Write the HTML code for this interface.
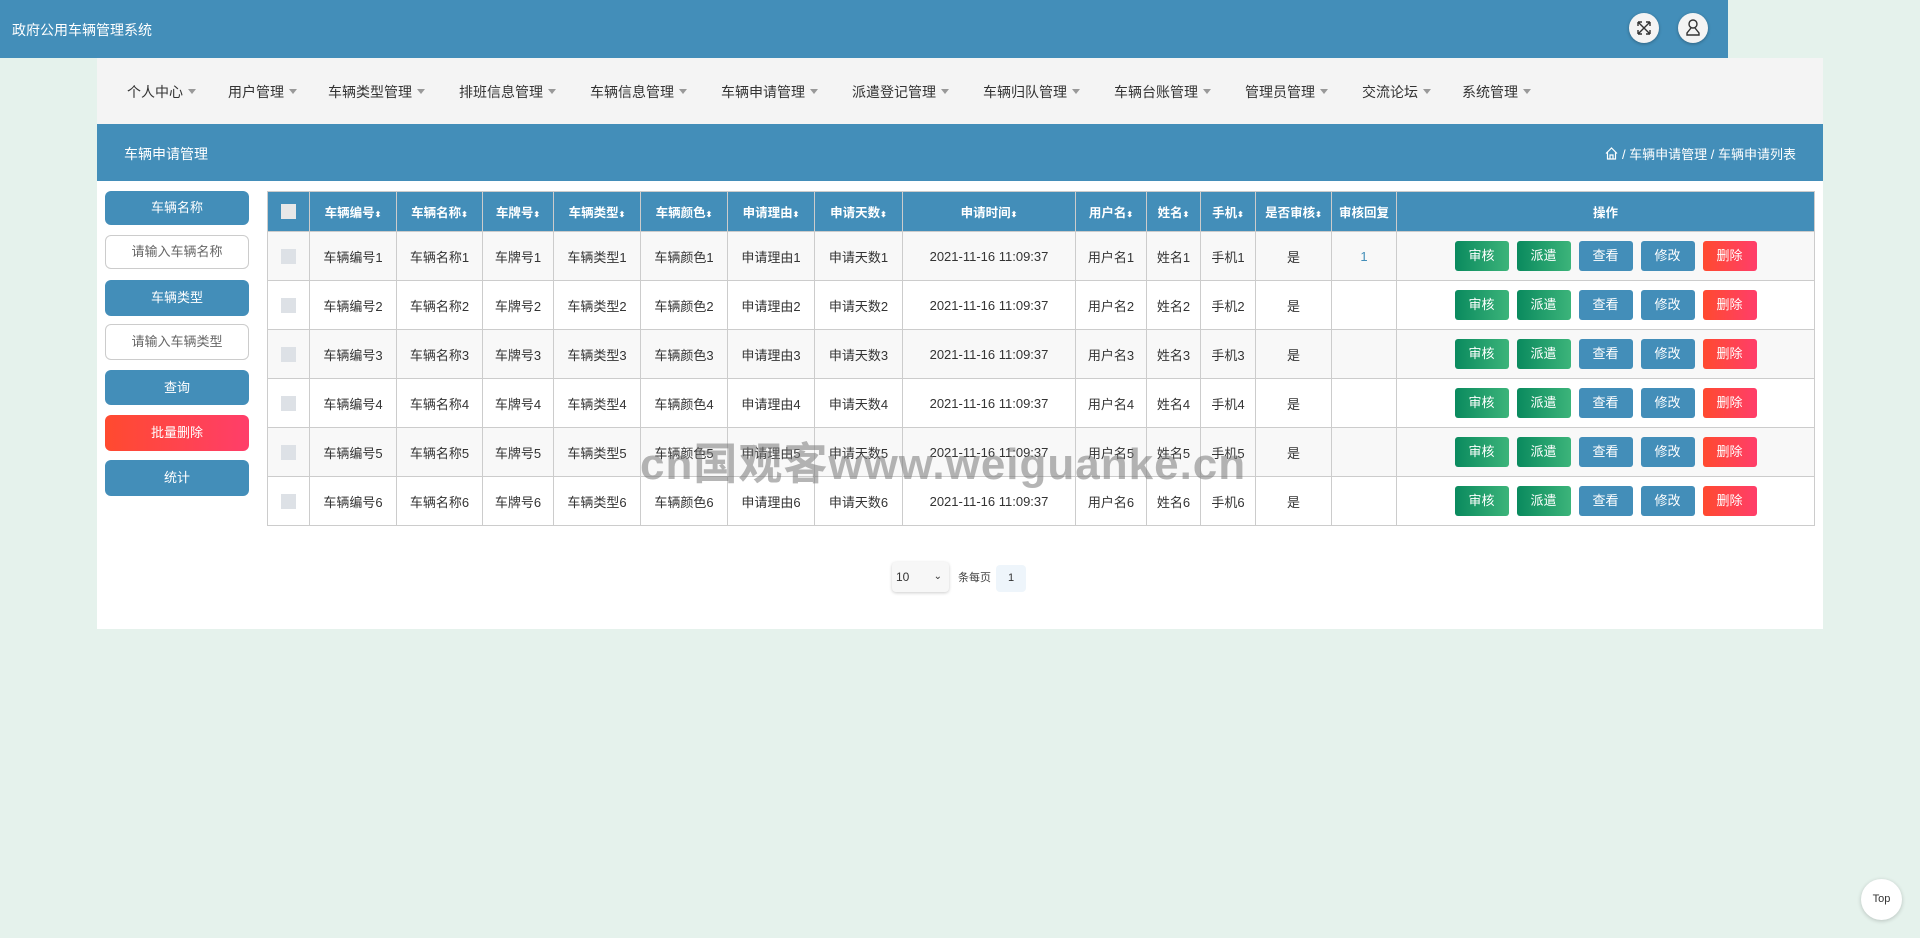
<!DOCTYPE html>
<html><head><meta charset="utf-8"><style>
*{box-sizing:border-box;margin:0;padding:0}
body{width:1920px;height:938px;background:#e5f2ec;font-family:"Liberation Sans","Noto Sans CJK SC",sans-serif;position:relative;overflow:hidden;color:#333}
.hdr{position:absolute;left:0;top:0;width:1728px;height:58px;background:#438eb9;color:#fff;font-size:14px}
.hdr .t{position:absolute;left:12px;top:20px}
.ic{position:absolute;top:13px;width:30px;height:30px;border-radius:50%;background:#f4f4f4;box-shadow:0 1px 3px rgba(0,0,0,.3)}
.nav{position:absolute;left:97px;top:58px;width:1726px;height:66px;background:#f4f4f4;font-size:14px;color:#333}
.nav span{position:absolute;top:24px;white-space:nowrap}
.nav span:after{content:"";display:inline-block;margin-left:5px;vertical-align:3px;border:4px solid transparent;border-top:5px solid #999;border-bottom:0}
.tb{position:absolute;left:97px;top:124px;width:1726px;height:57px;background:#438eb9;color:#fff;font-size:14px}
.main{position:absolute;left:97px;top:181px;width:1726px;height:448px;background:#fff}
.sb{position:absolute;left:105px;width:144px;border-radius:6px;font-size:13px;text-align:center;color:#fff;background:#438eb9}
.inp{background:#fff;border:1px solid #ccc;color:#666}
table{position:absolute;left:267px;top:191px;width:1548px;border-collapse:collapse;font-size:13px;text-align:center}
th{background:#438eb9;color:#fff;height:40px;border:1px solid #ccc;font-weight:bold;font-size:12.5px;white-space:nowrap}
td{height:49px;border:1px solid #ccc;white-space:nowrap}
tbody tr:nth-child(odd){background:#f8f8f8}
.cb{display:inline-block;width:15px;height:15px;background:#dde1e6;vertical-align:middle}
th .cb{background:#e8e8e8}
.b{display:inline-block;width:54px;height:30px;line-height:30px;border-radius:3px;color:#fff;margin:0 4px;font-size:13px}
.g{background:linear-gradient(90deg,#0a8a5e,#3cb47a)}
.bl{background:#438eb9}
.r{background:linear-gradient(90deg,#ff4a2f,#ff3e6a)}
.ar{font-size:8px}
</style></head><body>
<div class="hdr"><div class="t">政府公用车辆管理系统</div>
<div class="ic" style="left:1629px"><svg width="30" height="30" viewBox="0 0 30 30" fill="none" stroke="#333" stroke-width="1.4"><path d="M9 9l12 12M21 9L9 21M9 9h4M9 9v4M21 9h-4M21 9v4M9 21h4M9 21v-4M21 21h-4M21 21v-4"/></svg></div>
<div class="ic" style="left:1678px"><svg width="30" height="30" viewBox="0 0 30 30" fill="none" stroke="#333" stroke-width="1.4"><circle cx="15" cy="11" r="4"/><path d="M13 15l-4 5v2h12v-2l-4-5"/></svg></div>
</div>
<div class="nav">
<span style="left:30px">个人中心</span><span style="left:131px">用户管理</span><span style="left:231px">车辆类型管理</span><span style="left:362px">排班信息管理</span><span style="left:493px">车辆信息管理</span><span style="left:624px">车辆申请管理</span><span style="left:755px">派遣登记管理</span><span style="left:886px">车辆归队管理</span><span style="left:1017px">车辆台账管理</span><span style="left:1148px">管理员管理</span><span style="left:1265px">交流论坛</span><span style="left:1365px">系统管理</span>
</div>
<div class="tb"><span style="position:absolute;left:27px;top:20px">车辆申请管理</span>
<span style="position:absolute;right:27px;top:20px;font-size:13px"><svg width="13" height="13" viewBox="0 0 13 13" fill="none" stroke="#fff" stroke-width="1.2" style="vertical-align:-1px"><path d="M1 6.5L6.5 1 12 6.5M2.5 5v7h8V5M5 12V8h3v4"/></svg> / 车辆申请管理 / 车辆申请列表</span></div>
<div class="main"></div>
<div class="sb" style="top:191px;height:34px;line-height:34px">车辆名称</div>
<div class="sb inp" style="top:235px;height:34px;line-height:32px">请输入车辆名称</div>
<div class="sb" style="top:280px;height:36px;line-height:36px">车辆类型</div>
<div class="sb inp" style="top:324px;height:36px;line-height:34px">请输入车辆类型</div>
<div class="sb" style="top:370px;height:35px;line-height:35px">查询</div>
<div class="sb" style="top:415px;height:36px;line-height:36px;background:linear-gradient(90deg,#ff4a2f,#ff3e6a)">批量删除</div>
<div class="sb" style="top:460px;height:36px;line-height:36px">统计</div>
<table>
<colgroup><col style="width:42px"><col style="width:87px"><col style="width:86px"><col style="width:71px"><col style="width:87px"><col style="width:87px"><col style="width:87px"><col style="width:88px"><col style="width:173px"><col style="width:71px"><col style="width:54px"><col style="width:55px"><col style="width:76px"><col style="width:65px"><col></colgroup>
<thead><tr><th><span class="cb"></span></th><th>车辆编号<span class="ar">⬍</span></th><th>车辆名称<span class="ar">⬍</span></th><th>车牌号<span class="ar">⬍</span></th><th>车辆类型<span class="ar">⬍</span></th><th>车辆颜色<span class="ar">⬍</span></th><th>申请理由<span class="ar">⬍</span></th><th>申请天数<span class="ar">⬍</span></th><th>申请时间<span class="ar">⬍</span></th><th>用户名<span class="ar">⬍</span></th><th>姓名<span class="ar">⬍</span></th><th>手机<span class="ar">⬍</span></th><th>是否审核<span class="ar">⬍</span></th><th>审核回复</th><th>操作</th></tr></thead>
<tbody>
<tr><td><span class="cb"></span></td><td>车辆编号1</td><td>车辆名称1</td><td>车牌号1</td><td>车辆类型1</td><td>车辆颜色1</td><td>申请理由1</td><td>申请天数1</td><td>2021-11-16 11:09:37</td><td>用户名1</td><td>姓名1</td><td>手机1</td><td>是</td><td style="color:#438eb9">1</td><td><span class="b g">审核</span><span class="b g">派遣</span><span class="b bl">查看</span><span class="b bl">修改</span><span class="b r">删除</span></td></tr>
<tr><td><span class="cb"></span></td><td>车辆编号2</td><td>车辆名称2</td><td>车牌号2</td><td>车辆类型2</td><td>车辆颜色2</td><td>申请理由2</td><td>申请天数2</td><td>2021-11-16 11:09:37</td><td>用户名2</td><td>姓名2</td><td>手机2</td><td>是</td><td></td><td><span class="b g">审核</span><span class="b g">派遣</span><span class="b bl">查看</span><span class="b bl">修改</span><span class="b r">删除</span></td></tr>
<tr><td><span class="cb"></span></td><td>车辆编号3</td><td>车辆名称3</td><td>车牌号3</td><td>车辆类型3</td><td>车辆颜色3</td><td>申请理由3</td><td>申请天数3</td><td>2021-11-16 11:09:37</td><td>用户名3</td><td>姓名3</td><td>手机3</td><td>是</td><td></td><td><span class="b g">审核</span><span class="b g">派遣</span><span class="b bl">查看</span><span class="b bl">修改</span><span class="b r">删除</span></td></tr>
<tr><td><span class="cb"></span></td><td>车辆编号4</td><td>车辆名称4</td><td>车牌号4</td><td>车辆类型4</td><td>车辆颜色4</td><td>申请理由4</td><td>申请天数4</td><td>2021-11-16 11:09:37</td><td>用户名4</td><td>姓名4</td><td>手机4</td><td>是</td><td></td><td><span class="b g">审核</span><span class="b g">派遣</span><span class="b bl">查看</span><span class="b bl">修改</span><span class="b r">删除</span></td></tr>
<tr><td><span class="cb"></span></td><td>车辆编号5</td><td>车辆名称5</td><td>车牌号5</td><td>车辆类型5</td><td>车辆颜色5</td><td>申请理由5</td><td>申请天数5</td><td>2021-11-16 11:09:37</td><td>用户名5</td><td>姓名5</td><td>手机5</td><td>是</td><td></td><td><span class="b g">审核</span><span class="b g">派遣</span><span class="b bl">查看</span><span class="b bl">修改</span><span class="b r">删除</span></td></tr>
<tr><td><span class="cb"></span></td><td>车辆编号6</td><td>车辆名称6</td><td>车牌号6</td><td>车辆类型6</td><td>车辆颜色6</td><td>申请理由6</td><td>申请天数6</td><td>2021-11-16 11:09:37</td><td>用户名6</td><td>姓名6</td><td>手机6</td><td>是</td><td></td><td><span class="b g">审核</span><span class="b g">派遣</span><span class="b bl">查看</span><span class="b bl">修改</span><span class="b r">删除</span></td></tr>
</tbody></table>
<div style="position:absolute;left:640px;top:428px;font-size:44px;font-weight:bold;color:rgba(120,120,120,.55);white-space:nowrap;letter-spacing:1px">cn国观客www.weiguanke.cn</div>
<div style="position:absolute;left:892px;top:562px;width:57px;height:30px;background:#f7f7f7;border-radius:4px;box-shadow:0 1px 3px rgba(0,0,0,.2);font-size:12px;line-height:30px;padding-left:4px">10<span style="position:absolute;right:7px;top:0;font-size:10px">&#8964;</span></div>
<div style="position:absolute;left:958px;top:569px;font-size:11px;color:#444">条每页</div>
<div style="position:absolute;left:996px;top:565px;width:30px;height:27px;background:#eef5fb;border-radius:4px;text-align:center;line-height:27px;font-size:11px">1</div>
<div style="position:absolute;left:1861px;top:879px;width:41px;height:41px;border-radius:50%;background:#fff;box-shadow:0 1px 4px rgba(0,0,0,.2);font-size:11px;text-align:center;line-height:41px">Top</div>
</body></html>
